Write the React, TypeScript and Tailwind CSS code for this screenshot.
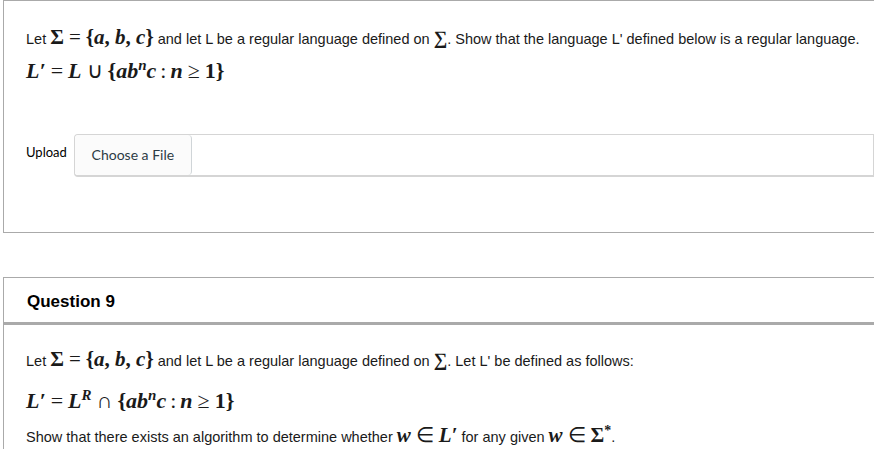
const mathFont = "font-['Liberation_Serif',serif]";

function M({ children, className = "" }: { children: React.ReactNode; className?: string }) {
  return <span className={`${mathFont} italic font-bold ${className}`}>{children}</span>;
}

function Op({ children }: { children: React.ReactNode }) {
  return <span className={`${mathFont} not-italic font-normal px-[5px]`}>{children}</span>;
}

function SigmaSet() {
  return (
    <span className="text-[21px] leading-none">
      <span className={`${mathFont} font-bold`}>Σ</span>
      <Op>=</Op>
      <span className={`${mathFont} font-bold`}>{"{"}</span>
      <M>a</M>
      <span className={`${mathFont} font-bold`}>, </span>
      <M>b</M>
      <span className={`${mathFont} font-bold`}>, </span>
      <M>c</M>
      <span className={`${mathFont} font-bold`}>{"}"}</span>
    </span>
  );
}

function SmallSigma() {
  return <span className={`${mathFont} font-bold text-[19px] leading-none`}>∑</span>;
}

function SetTail() {
  return (
    <>
      <span className={`${mathFont} font-bold`}>{"{"}</span>
      <M>a</M>
      <M>b</M>
      <M className="relative -top-[8px] text-[15px]">n</M>
      <M>c</M>
      <span className={`${mathFont} px-[4px]`}>:</span>
      <M>n</M>
      <Op>≥</Op>
      <span className={`${mathFont} font-bold`}>1</span>
      <span className={`${mathFont} font-bold`}>{"}"}</span>
    </>
  );
}

export default function App() {
  return (
    <div className="min-h-[472px] bg-white pb-8 font-['Liberation_Sans',Arial,sans-serif] text-[14.5px] text-[#1a1a1a]">
      <section className="ml-[3px] h-[233px] border-l border-t border-b border-[#aaa] pl-[22px] pt-[25px]">
        <p className="flex items-baseline">
          <span>Let&nbsp;</span>
          <SigmaSet />
          <span>&nbsp;and let L be a regular language defined on&nbsp;</span>
          <SmallSigma />
          <span>. Show that the language L' defined below is a regular language.</span>
        </p>
        <p className="mt-[9px] text-[22px] leading-none">
          <M>L′</M>
          <Op>=</Op>
          <M>L</M>
          <Op>∪</Op>
          <SetTail />
        </p>
        <div className="mt-[52px] flex items-start">
          <span className="pt-[9px] pr-[7px] font-['Lato',sans-serif] text-[13px] text-black">Upload</span>
          <div className="flex h-[43px] flex-1 rounded-l-[4px] border border-b-2 border-[#d5d5d5]">
            <button className="w-[117px] rounded-[4px] border-r border-[#d0d5d8] bg-[#fbfbfb] font-['Lato',sans-serif] text-[14px] text-[#2d3b45]">
              Choose a File
            </button>
          </div>
        </div>
      </section>

      <section className="ml-[3px] mt-[44px] border-l border-t border-[#aaa]">
        <div className="h-[47px] border-b-[3px] border-[#aaa] pl-[23px] pt-[11px]">
          <h2 className="text-[17px] font-bold text-black">Question 9</h2>
        </div>
        <div className="pl-[22px] pt-[23px]">
          <p className="flex items-baseline">
            <span>Let&nbsp;</span>
            <SigmaSet />
            <span>&nbsp;and let L be a regular language defined on&nbsp;</span>
            <SmallSigma />
            <span>. Let L' be defined as follows:</span>
          </p>
          <p className="mt-[17px] text-[22px] leading-none">
            <M>L′</M>
            <Op>=</Op>
            <M>L</M>
            <M className="relative -top-[8px] text-[15px]">R</M>
            <Op>∩</Op>
            <SetTail />
          </p>
          <p className="mt-[12px] flex items-baseline">
            <span>Show that there exists an algorithm to determine whether&nbsp;</span>
            <span className="text-[21px] leading-none">
              <M>w</M>
              <Op>∈</Op>
              <M>L′</M>
            </span>
            <span>&nbsp;for any given&nbsp;</span>
            <span className="text-[21px] leading-none">
              <M>w</M>
              <Op>∈</Op>
              <span className={`${mathFont} font-bold`}>Σ</span>
              <span className={`${mathFont} font-bold relative -top-[7px] text-[14px]`}>*</span>
            </span>
            <span>.</span>
          </p>
        </div>
      </section>
    </div>
  );
}
